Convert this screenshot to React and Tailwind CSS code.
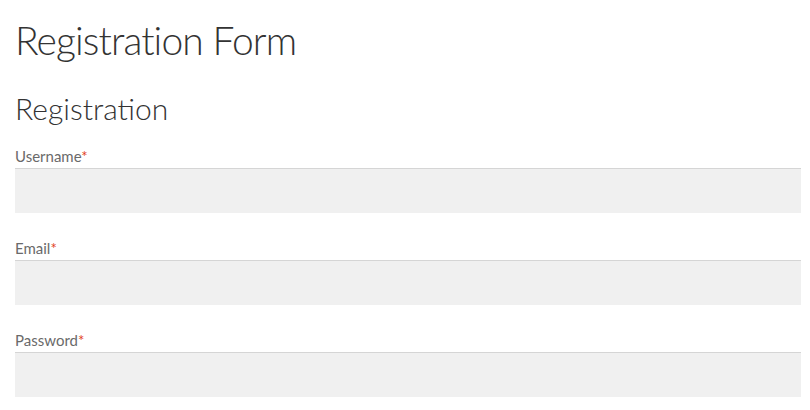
import React from 'react';

const fields = [
  { id: 'username', label: 'Username', type: 'text' },
  { id: 'email', label: 'Email', type: 'email' },
  { id: 'password', label: 'Password', type: 'password' },
];

export default function App() {
  return (
    <div className="min-h-screen bg-white pl-[15px] pr-[9px] pt-[14px] font-['Lato','Open_Sans',sans-serif]">
      <h1 className="text-[39px] font-light leading-[52px] tracking-[-0.9px] text-[#333]">Registration Form</h1>
      <h2 className="mt-[24px] text-[30px] font-light leading-[36px] text-[#333]">Registration</h2>
      <form className="mt-[19px] flex flex-col gap-[24px]">
        {fields.map((f) => (
          <div key={f.id} className="flex flex-col">
            <label htmlFor={f.id} className="text-[15px] leading-[22px] text-[#6a6a6a]">
              {f.label}
              <span className="text-[#e2401c]">*</span>
            </label>
            <input
              id={f.id}
              type={f.type}
              className="mt-[1px] h-[45px] w-full border-t border-[#d5d5d5] bg-[#f0f0f0] outline-none"
            />
          </div>
        ))}
      </form>
    </div>
  );
}
